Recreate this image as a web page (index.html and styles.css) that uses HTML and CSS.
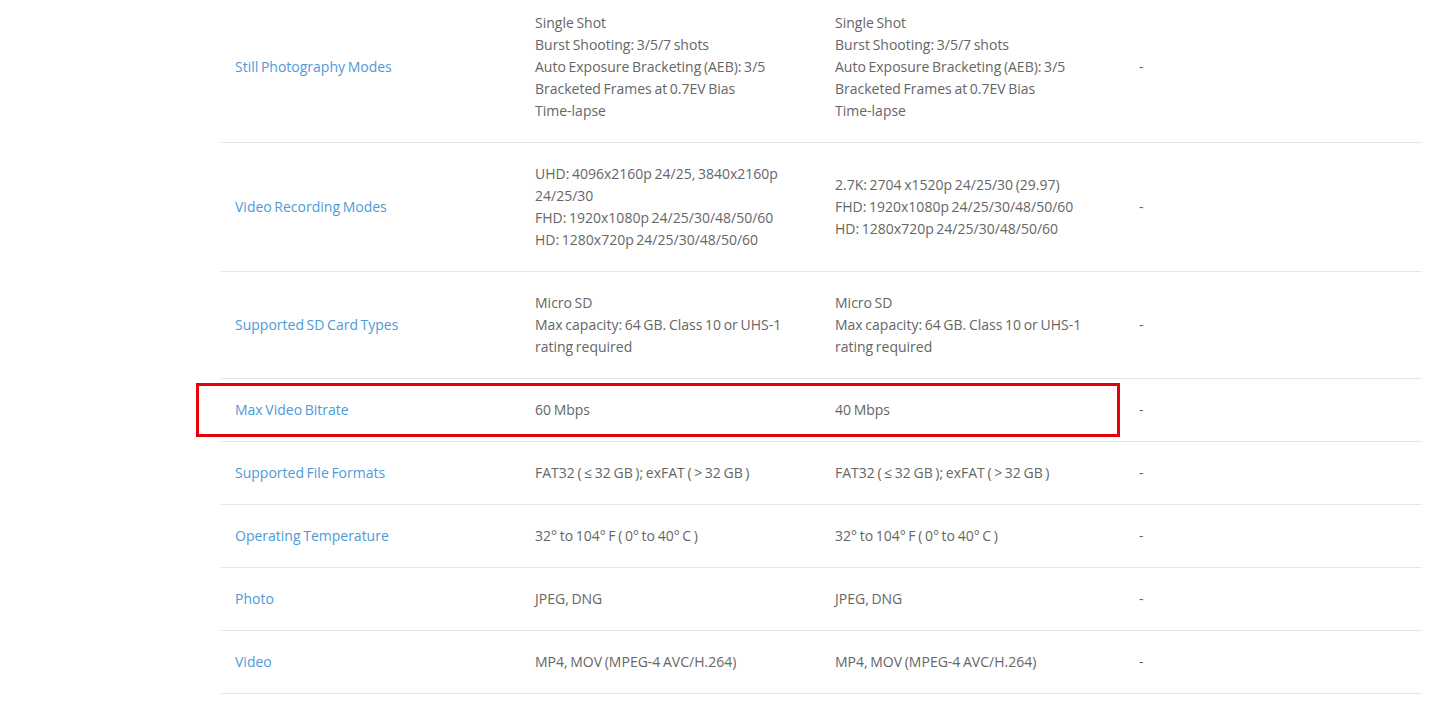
FILE: index.html
```html
<!DOCTYPE html>
<html lang="en">
<head>
<meta charset="utf-8">
<title>Specs</title>
<link rel="stylesheet" href="styles.css">
</head>
<body>
<div class="specs">
  <div class="row">
    <div class="cell label">Still Photography Modes</div>
    <div class="cell">Single Shot<br>Burst Shooting: 3/5/7 shots<br>Auto Exposure Bracketing (AEB): 3/5 Bracketed Frames at 0.7EV Bias<br>Time-lapse</div>
    <div class="cell">Single Shot<br>Burst Shooting: 3/5/7 shots<br>Auto Exposure Bracketing (AEB): 3/5 Bracketed Frames at 0.7EV Bias<br>Time-lapse</div>
    <div class="cell last">-</div>
  </div>
  <div class="row">
    <div class="cell label">Video Recording Modes</div>
    <div class="cell">UHD: 4096x2160p 24/25, 3840x2160p 24/25/30<br>FHD: 1920x1080p 24/25/30/48/50/60<br>HD: 1280x720p 24/25/30/48/50/60</div>
    <div class="cell">2.7K: 2704 x1520p 24/25/30 (29.97)<br>FHD: 1920x1080p 24/25/30/48/50/60<br>HD: 1280x720p 24/25/30/48/50/60</div>
    <div class="cell last">-</div>
  </div>
  <div class="row">
    <div class="cell label">Supported SD Card Types</div>
    <div class="cell">Micro SD<br>Max capacity: 64 GB. Class 10 or UHS-1 rating required</div>
    <div class="cell">Micro SD<br>Max capacity: 64 GB. Class 10 or UHS-1 rating required</div>
    <div class="cell last">-</div>
  </div>
  <div class="row highlighted">
    <div class="cell label">Max Video Bitrate</div>
    <div class="cell">60 Mbps</div>
    <div class="cell">40 Mbps</div>
    <div class="cell last">-</div>
    <div class="mark"></div>
  </div>
  <div class="row">
    <div class="cell label">Supported File Formats</div>
    <div class="cell">FAT32 ( ≤ 32 GB ); exFAT ( &gt; 32 GB )</div>
    <div class="cell">FAT32 ( ≤ 32 GB ); exFAT ( &gt; 32 GB )</div>
    <div class="cell last">-</div>
  </div>
  <div class="row">
    <div class="cell label">Operating Temperature</div>
    <div class="cell">32° to 104° F ( 0° to 40° C )</div>
    <div class="cell">32° to 104° F ( 0° to 40° C )</div>
    <div class="cell last">-</div>
  </div>
  <div class="row">
    <div class="cell label">Photo</div>
    <div class="cell">JPEG, DNG</div>
    <div class="cell">JPEG, DNG</div>
    <div class="cell last">-</div>
  </div>
  <div class="row">
    <div class="cell label">Video</div>
    <div class="cell">MP4, MOV (MPEG-4 AVC/H.264)</div>
    <div class="cell">MP4, MOV (MPEG-4 AVC/H.264)</div>
    <div class="cell last">-</div>
  </div>
</div>
</body>
</html>
```
FILE: styles.css
```css
html, body {
  margin: 0;
  padding: 0;
  background: #ffffff;
}
body {
  font-family: "Open Sans", "Liberation Sans", sans-serif;
  font-size: 14px;
  line-height: 22px;
  color: #666666;
  word-spacing: -1px;
}
.specs {
  width: 1200px;
  margin: -8px 0 0 221px;
}
.row {
  position: relative;
  display: grid;
  grid-template-columns: 300px 300px 304px 296px;
  align-items: center;
  padding: 20px 0;
  border-bottom: 1px solid #e5e5e5;
}
.cell {
  padding: 0 30px 0 14px;
}
.label {
  color: #4d9ad9;
}
.last {
  padding-left: 14px;
}
.mark {
  position: absolute;
  left: -25px;
  top: 4px;
  width: 918px;
  height: 48px;
  border: 3px solid #e6000a;
  pointer-events: none;
}
```
